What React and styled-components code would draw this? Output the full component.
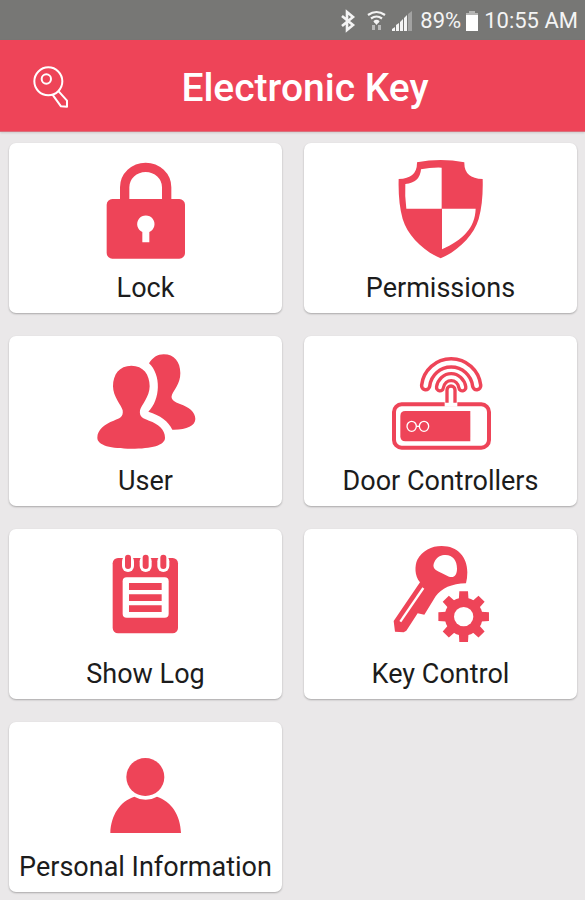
import React from "react";
import styled, { createGlobalStyle } from "styled-components";

const RED = "#ee4458";

const GlobalStyle = createGlobalStyle`
  * { box-sizing: border-box; }
  body {
    margin: 0;
    background: #eae8e9;
    font-family: Roboto, "Liberation Sans", sans-serif;
  }
`;

const Screen = styled.div`
  min-height: 100vh;
  background: #eae8e9;
`;

const StatusBar = styled.div`
  display: flex;
  align-items: center;
  justify-content: flex-end;
  height: 40px;
  padding: 2px 7px 0 0;
  background: #777775;
  color: #f4f4f4;
  font-size: 22px;
  line-height: 38px;
  white-space: nowrap;
`;

const StatusIcons = styled.svg`
  width: 76px;
  height: 38px;
  margin-right: 6px;
`;

const BatteryIcon = styled.svg`
  width: 14px;
  height: 38px;
  margin: 0 5px 0 4px;
`;

const Header = styled.header`
  display: grid;
  grid-template-columns: 1fr auto 1fr;
  align-items: center;
  height: 92px;
  padding: 0 7px 0 32px;
  background: ${RED};
  border-bottom: 1px solid #d9707c;
  box-shadow: 0 1px 2px rgba(0, 0, 0, 0.12);
`;

const KeyButton = styled.button`
  justify-self: start;
  display: flex;
  padding: 0;
  border: 0;
  background: none;
  cursor: pointer;
`;

const KeyGlyph = styled.svg`
  width: 40px;
  height: 44px;
`;

const Title = styled.h1`
  margin: 0;
  padding-top: 4px;
  color: #fff;
  font-size: 39px;
  font-weight: 500;
  line-height: 48px;
  white-space: nowrap;
`;

const Menu = styled.main`
  display: grid;
  grid-template-columns: 1fr 1fr;
  gap: 23px 22px;
  padding: 11px 8px 9px 9px;
`;

const Card = styled.button`
  display: flex;
  flex-direction: column;
  align-items: center;
  min-width: 0;
  padding: 7px 0 8px;
  border: 0;
  border-radius: 7px;
  background: #fff;
  box-shadow: 0 1px 2px rgba(0, 0, 0, 0.28);
  color: #1c1c1c;
  font-family: inherit;
  cursor: pointer;
`;

const CardIcon = styled.svg`
  width: 120px;
  height: 120px;
  fill: ${RED};
`;

const Label = styled.span`
  padding-top: 1px;
  font-size: 27px;
  line-height: 34px;
  white-space: nowrap;
`;

const gear = (() => {
  const pts = [];
  for (let i = 0; i < 8; i++) {
    const a = (i * Math.PI) / 4 - Math.PI / 2;
    [[-0.27, 54], [-0.17, 77], [0.17, 77], [0.27, 54]].forEach(([d, r]) => {
      pts.push(`${251 + r * Math.cos(a + d)},${260 + r * Math.sin(a + d)}`);
    });
  }
  return pts.join(" ");
})();

const items = [
  {
    label: "Lock",
    box: "-11 0 360 360",
    art: (
      <>
        <path d="M105 158V112a63 60 0 0 1 126 0v46" fill="none" stroke={RED} strokeWidth="28" />
        <rect x="51" y="147" width="235" height="179" rx="17" />
        <path fill="#fff" d="M158 277V246a26 26 0 1 1 21 0v31z" />
      </>
    ),
  },
  {
    label: "Permissions",
    box: "2 0 360 360",
    art: (
      <>
        <path d="M110 37Q181 23 252 37Q251 85 307 87Q309 158 295 207C280 256 235 302 181 325C127 302 82 256 67 207Q53 158 55 87Q111 85 110 37Z" />
        <path fill="#fff" d="M122 58Q151 52 184 53V176H78Q73 137 75 102Q119 98 122 58ZM185 176H286C284 235 247 269 185 298Z" />
      </>
    ),
  },
  {
    label: "User",
    box: "2 9 360 360",
    art: (
      <>
        <path d="M138 77C174 77 193 103 193 139C193 170 168 196 164 211C161 231 174 236 191 242C220 252 239 269 239 293C239 316 199 326 138 326C77 326 36 316 36 293C36 269 58 252 85 242C102 236 115 231 112 211C108 196 83 170 83 139C83 103 102 77 138 77Z" />
        <path d="M191 70C201 53 217 43 235 43C267 43 285 66 285 99C285 132 266 149 260 164C254 179 269 186 284 192C311 202 330 216 330 237C330 257 303 270 261 269C249 244 225 226 189 215C226 179 228 104 191 70Z" />
      </>
    ),
  },
  {
    label: "Door Controllers",
    box: "2 9 360 360",
    art: (
      <>
        <g fill="none" strokeLinecap="round">
          <path stroke={RED} strokeWidth="35" d="M136 137A77 77 0 0 1 289 137" />
          <path stroke="#fff" strokeWidth="14" d="M136 137A77 77 0 0 1 289 137" />
          <path stroke={RED} strokeWidth="31" d="M179 142A34 37 0 0 1 246 142" />
          <path stroke="#fff" strokeWidth="11" d="M179 142A34 37 0 0 1 246 142" />
        </g>
        <rect x="41" y="193" width="285" height="130" rx="23" fill="none" stroke={RED} strokeWidth="12" />
        <path fill="#fff" d="M193 150a19 19 0 0 1 38 0v50h-38z" />
        <path d="M200 188v-38a12 12 0 0 1 24 0v38" fill="none" stroke={RED} strokeWidth="10" />
        <path d="M75 213H270V304H75Q60 304 60 289V228Q60 213 75 213Z" />
        <g fill="none" stroke="#fff" strokeWidth="4">
          <ellipse cx="94" cy="259" rx="14" ry="15" />
          <ellipse cx="131" cy="259" rx="14" ry="15" />
          <path d="M108 259h9" />
        </g>
      </>
    ),
  },
  {
    label: "Show Log",
    box: "-11 -12 360 360",
    art: (
      <>
        <rect x="69" y="54" width="196" height="226" rx="16" />
        <rect x="99" y="112" width="138" height="121" rx="12" fill="#fff" />
        <path d="M118 129h98v21h-98zM118 163h98v20h-98zM118 196h98v20h-98z" />
        {[115, 168, 221].map((x) => (
          <g key={x}>
            <rect x={x - 18} y="46" width="36" height="50" rx="18" fill="#fff" />
            <rect x={x - 9} y="44" width="18" height="43" rx="9" />
          </g>
        ))}
      </>
    ),
  },
  {
    label: "Key Control",
    box: "3 18 360 360",
    art: (
      <>
        <path
          fillRule="evenodd"
          d="M185 48C233 48 262 81 262 127Q262 145 258 160C215 161 184 175 167 199L133 254L113 250L79 302L71 307L45 305L41 273L120 157C103 137 104 106 112 89C127 62 154 48 185 48ZM165 92C153 113 166 120 183 128L207 140C224 145 231 132 231 116C231 91 218 75 197 75C182 75 174 80 165 92Z"
        />
        <path d="M130 174L61 275" stroke="#fff" strokeWidth="7" />
        <polygon points={gear} />
        <circle cx="251" cy="260" r="57" />
        <circle cx="251" cy="260" r="29" fill="#fff" />
      </>
    ),
  },
  {
    label: "Personal Information",
    box: "-11 -36 360 360",
    art: (
      <>
        <circle cx="167" cy="108" r="57" />
        <path d="M62 276C64 222 91 181 134 167Q168 186 202 167C246 182 272 222 274 276Z" />
      </>
    ),
  },
];

export default function App() {
  return (
    <Screen>
      <GlobalStyle />
      <StatusBar>
        <StatusIcons viewBox="340 1 76 38" aria-hidden="true">
          <path d="M344 15l11 9-6 5V11l6 5-11 9" fill="none" stroke="#f4f4f4" strokeWidth="2.6" />
          <path
            d="M370 14q8.500-6 17 0M373 17.500q5.500-4 11 0M376 21q2.500-2 5 0"
            fill="none"
            stroke="#f4f4f4"
            strokeWidth="2.200"
          />
          <path d="M376 21h5l-2.500 3z" fill="#f4f4f4" />
          <path d="M375.500 24v5M381.500 24v5" stroke="#b9b9b9" strokeWidth="3" fill="none" />
          <path d="M394 30v-2l3-2v4zM398 30v-6l3-2v8zM402 30v-9l3-3v12zM406 30V17l3-3v16z" fill="#f4f4f4" />
          <path d="M410 30V13l4-3v20z" fill="#a2a2a1" />
        </StatusIcons>
        <span>89%</span>
        <BatteryIcon viewBox="0 1 14 38" aria-hidden="true">
          <path d="M4 10h6v2h3v3H1v-3h3z" fill="#b5b5b4" />
          <path d="M1 14h12v16H1z" fill="#fff" />
        </BatteryIcon>
        <span>10:55 AM</span>
      </StatusBar>
      <Header>
        <KeyButton type="button" aria-label="Keys">
          <KeyGlyph viewBox="96 98 120 132" fill="none" stroke="#fff" strokeWidth="6" aria-hidden="true">
            <circle cx="145" cy="150" r="42" />
            <path d="M157 189L183 225L201 226V208L174 178" strokeLinejoin="round" />
            <circle cx="139" cy="143" r="14" />
          </KeyGlyph>
        </KeyButton>
        <Title>Electronic Key</Title>
      </Header>
      <Menu>
        {items.map(({ label, box, art }) => (
          <Card key={label} type="button">
            <CardIcon viewBox={box} aria-hidden="true">{art}</CardIcon>
            <Label>{label}</Label>
          </Card>
        ))}
      </Menu>
    </Screen>
  );
}
